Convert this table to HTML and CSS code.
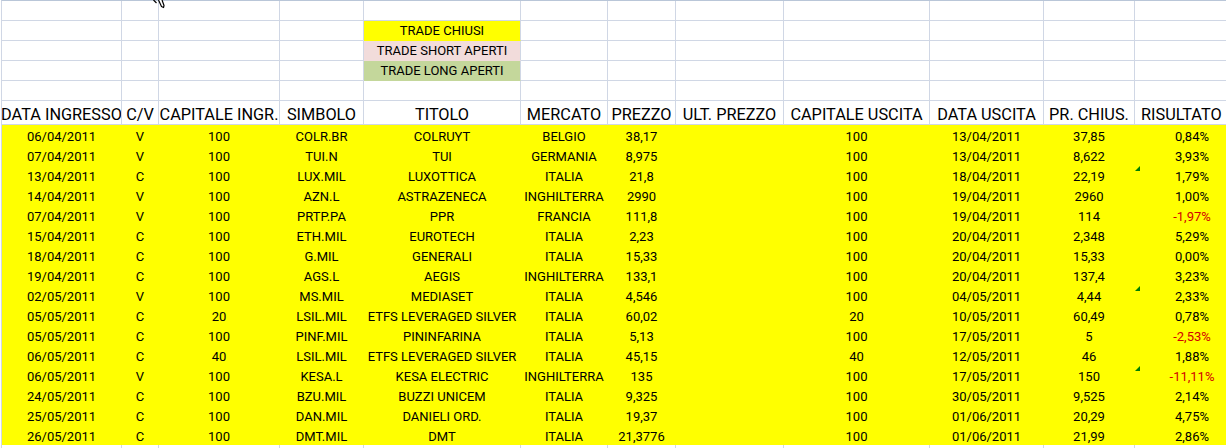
FILE: index.html
```html
<!DOCTYPE html>
<html lang="it">
<head>
<meta charset="utf-8">
<title>Trade</title>
<link rel="stylesheet" href="styles.css">
</head>
<body>
<div class="sheet">
  <div class="row"><div class="c"></div><div class="c"></div><div class="c"></div><div class="c"></div><div class="c"></div><div class="c"></div><div class="c"></div><div class="c"></div><div class="c"></div><div class="c"></div><div class="c"></div><div class="c"></div></div>
  <div class="row legend-row"><div class="c"></div><div class="c"></div><div class="c"></div><div class="c"></div><div class="c lg-yellow">TRADE CHIUSI</div><div class="c"></div><div class="c"></div><div class="c"></div><div class="c"></div><div class="c"></div><div class="c"></div><div class="c"></div></div>
  <div class="row legend-row"><div class="c"></div><div class="c"></div><div class="c"></div><div class="c"></div><div class="c lg-pink">TRADE SHORT APERTI</div><div class="c"></div><div class="c"></div><div class="c"></div><div class="c"></div><div class="c"></div><div class="c"></div><div class="c"></div></div>
  <div class="row legend-row"><div class="c"></div><div class="c"></div><div class="c"></div><div class="c"></div><div class="c lg-green">TRADE LONG APERTI</div><div class="c"></div><div class="c"></div><div class="c"></div><div class="c"></div><div class="c"></div><div class="c"></div><div class="c"></div></div>
  <div class="row"><div class="c"></div><div class="c"></div><div class="c"></div><div class="c"></div><div class="c"></div><div class="c"></div><div class="c"></div><div class="c"></div><div class="c"></div><div class="c"></div><div class="c"></div><div class="c"></div></div>
  <div class="row head">
    <div class="c">DATA INGRESSO</div><div class="c">C/V</div><div class="c">CAPITALE INGR.</div><div class="c">SIMBOLO</div><div class="c">TITOLO</div><div class="c">MERCATO</div><div class="c">PREZZO</div><div class="c">ULT. PREZZO</div><div class="c">CAPITALE USCITA</div><div class="c">DATA USCITA</div><div class="c">PR. CHIUS.</div><div class="c res-h">RISULTATO</div>
  </div>
  <div class="row data"><div class="c">06/04/2011</div><div class="c">V</div><div class="c">100</div><div class="c">COLR.BR</div><div class="c">COLRUYT</div><div class="c">BELGIO</div><div class="c">38,17</div><div class="c"></div><div class="c">100</div><div class="c">13/04/2011</div><div class="c">37,85</div><div class="c res">0,84%</div></div>
  <div class="row data"><div class="c">07/04/2011</div><div class="c">V</div><div class="c">100</div><div class="c">TUI.N</div><div class="c">TUI</div><div class="c">GERMANIA</div><div class="c">8,975</div><div class="c"></div><div class="c">100</div><div class="c">13/04/2011</div><div class="c">8,622</div><div class="c res">3,93%</div></div>
  <div class="row data"><div class="c">13/04/2011</div><div class="c">C</div><div class="c">100</div><div class="c">LUX.MIL</div><div class="c">LUXOTTICA</div><div class="c">ITALIA</div><div class="c">21,8</div><div class="c"></div><div class="c">100</div><div class="c">18/04/2011</div><div class="c">22,19</div><div class="c res"><span class="flag"></span>1,79%</div></div>
  <div class="row data"><div class="c">14/04/2011</div><div class="c">V</div><div class="c">100</div><div class="c">AZN.L</div><div class="c">ASTRAZENECA</div><div class="c">INGHILTERRA</div><div class="c">2990</div><div class="c"></div><div class="c">100</div><div class="c">19/04/2011</div><div class="c">2960</div><div class="c res">1,00%</div></div>
  <div class="row data"><div class="c">07/04/2011</div><div class="c">V</div><div class="c">100</div><div class="c">PRTP.PA</div><div class="c">PPR</div><div class="c">FRANCIA</div><div class="c">111,8</div><div class="c"></div><div class="c">100</div><div class="c">19/04/2011</div><div class="c">114</div><div class="c res neg">-1,97%</div></div>
  <div class="row data"><div class="c">15/04/2011</div><div class="c">C</div><div class="c">100</div><div class="c">ETH.MIL</div><div class="c">EUROTECH</div><div class="c">ITALIA</div><div class="c">2,23</div><div class="c"></div><div class="c">100</div><div class="c">20/04/2011</div><div class="c">2,348</div><div class="c res">5,29%</div></div>
  <div class="row data"><div class="c">18/04/2011</div><div class="c">C</div><div class="c">100</div><div class="c">G.MIL</div><div class="c">GENERALI</div><div class="c">ITALIA</div><div class="c">15,33</div><div class="c"></div><div class="c">100</div><div class="c">20/04/2011</div><div class="c">15,33</div><div class="c res">0,00%</div></div>
  <div class="row data"><div class="c">19/04/2011</div><div class="c">C</div><div class="c">100</div><div class="c">AGS.L</div><div class="c">AEGIS</div><div class="c">INGHILTERRA</div><div class="c">133,1</div><div class="c"></div><div class="c">100</div><div class="c">20/04/2011</div><div class="c">137,4</div><div class="c res">3,23%</div></div>
  <div class="row data"><div class="c">02/05/2011</div><div class="c">V</div><div class="c">100</div><div class="c">MS.MIL</div><div class="c">MEDIASET</div><div class="c">ITALIA</div><div class="c">4,546</div><div class="c"></div><div class="c">100</div><div class="c">04/05/2011</div><div class="c">4,44</div><div class="c res"><span class="flag"></span>2,33%</div></div>
  <div class="row data"><div class="c">05/05/2011</div><div class="c">C</div><div class="c">20</div><div class="c">LSIL.MIL</div><div class="c">ETFS LEVERAGED SILVER</div><div class="c">ITALIA</div><div class="c">60,02</div><div class="c"></div><div class="c">20</div><div class="c">10/05/2011</div><div class="c">60,49</div><div class="c res">0,78%</div></div>
  <div class="row data"><div class="c">05/05/2011</div><div class="c">C</div><div class="c">100</div><div class="c">PINF.MIL</div><div class="c">PININFARINA</div><div class="c">ITALIA</div><div class="c">5,13</div><div class="c"></div><div class="c">100</div><div class="c">17/05/2011</div><div class="c">5</div><div class="c res neg">-2,53%</div></div>
  <div class="row data"><div class="c">06/05/2011</div><div class="c">C</div><div class="c">40</div><div class="c">LSIL.MIL</div><div class="c">ETFS LEVERAGED SILVER</div><div class="c">ITALIA</div><div class="c">45,15</div><div class="c"></div><div class="c">40</div><div class="c">12/05/2011</div><div class="c">46</div><div class="c res">1,88%</div></div>
  <div class="row data"><div class="c">06/05/2011</div><div class="c">V</div><div class="c">100</div><div class="c">KESA.L</div><div class="c">KESA ELECTRIC</div><div class="c">INGHILTERRA</div><div class="c">135</div><div class="c"></div><div class="c">100</div><div class="c">17/05/2011</div><div class="c">150</div><div class="c res neg"><span class="flag"></span>-11,11%</div></div>
  <div class="row data"><div class="c">24/05/2011</div><div class="c">C</div><div class="c">100</div><div class="c">BZU.MIL</div><div class="c">BUZZI UNICEM</div><div class="c">ITALIA</div><div class="c">9,325</div><div class="c"></div><div class="c">100</div><div class="c">30/05/2011</div><div class="c">9,525</div><div class="c res">2,14%</div></div>
  <div class="row data"><div class="c">25/05/2011</div><div class="c">C</div><div class="c">100</div><div class="c">DAN.MIL</div><div class="c">DANIELI ORD.</div><div class="c">ITALIA</div><div class="c">19,37</div><div class="c"></div><div class="c">100</div><div class="c">01/06/2011</div><div class="c">20,29</div><div class="c res">4,75%</div></div>
  <div class="row data"><div class="c">26/05/2011</div><div class="c">C</div><div class="c">100</div><div class="c">DMT.MIL</div><div class="c">DMT</div><div class="c">ITALIA</div><div class="c">21,3776</div><div class="c"></div><div class="c">100</div><div class="c">01/06/2011</div><div class="c">21,99</div><div class="c res">2,86%</div></div>
  <div class="row"><div class="c"></div><div class="c"></div><div class="c"></div><div class="c"></div><div class="c"></div><div class="c"></div><div class="c"></div><div class="c"></div><div class="c"></div><div class="c"></div><div class="c"></div><div class="c"></div></div>
</div>
<svg class="cursor" width="16" height="10" viewBox="0 0 16 10" aria-hidden="true">
  <path d="M1.5 0 L4.5 3 M6.5 0 L9.5 6.5 L11.5 7.5 L12 5.5 L10 0" fill="#fff" stroke="#000" stroke-width="1.2" stroke-linejoin="round"/>
</svg>
</body>
</html>
```

FILE: styles.css
```css
html, body {
  margin: 0;
  padding: 0;
  background: #ffffff;
  overflow: hidden;
  width: 1226px;
  height: 448px;
}

body {
  position: relative;
  font-family: Roboto, "Liberation Sans", Arial, sans-serif;
  color: #000000;
}

.sheet {
  margin-left: 1px;
  border-left: 1px solid #d0d7e5;
  border-top: 1px solid #b9c6d8;
  width: 1224px;
}

.row {
  display: grid;
  grid-template-columns: 120px 37px 121px 84px 157px 87px 68px 108px 146px 114px 91px 91px;
  height: 20px;
  font-size: 13px;
  line-height: 15px;
}

.c {
  box-sizing: border-box;
  border-right: 1px solid #d0d7e5;
  border-bottom: 1px solid #d0d7e5;
  display: flex;
  justify-content: center;
  align-items: flex-start;
  overflow: hidden;
  white-space: nowrap;
  position: relative;
}

.row .c:last-child {
  border-right: none;
}

.legend-row .c {
  padding-top: 2px;
}

.lg-yellow {
  background: #ffff00;
  border-bottom-color: #ffff00;
}

.lg-pink {
  background: #f2dcdb;
  border-bottom-color: #f2dcdb;
}

.lg-green {
  background: #c4d79b;
  border-bottom-color: #c4d79b;
}

.head {
  height: 24px;
  font-size: 16.3px;
  line-height: 19px;
}

.head .c {
  padding-top: 4px;
}

.head .res-h {
  padding-left: 6px;
  justify-content: flex-start;
}

.data {
  background: #ffff00;
}

.data .c {
  border-right-color: #ffff00;
  border-bottom-color: #ffff00;
  padding-top: 4px;
}

.data .res {
  padding-left: 23px;
}

.data .neg {
  color: #d20000;
}

.flag {
  position: absolute;
  left: 0;
  top: 1px;
  width: 5px;
  height: 5px;
  background: #008000;
  clip-path: polygon(100% 0, 100% 100%, 0 100%);
}

.cursor {
  position: absolute;
  left: 152px;
  top: 0;
}
```
